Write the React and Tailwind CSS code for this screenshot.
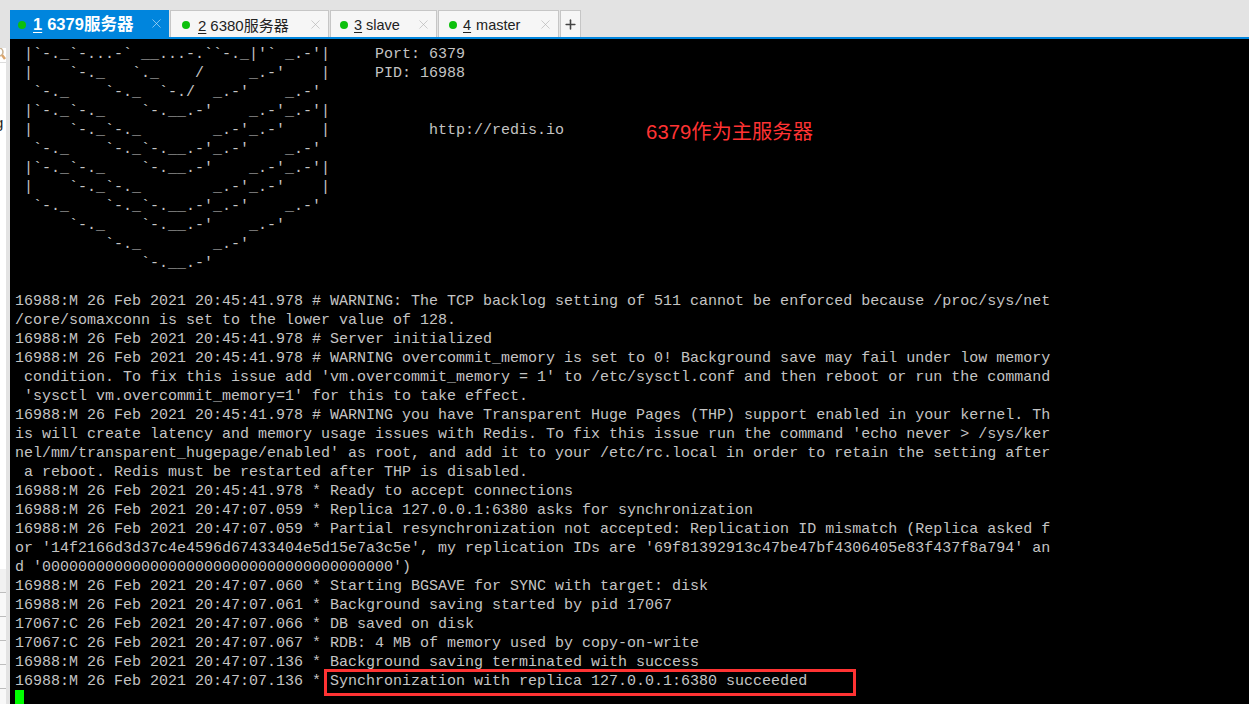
import React from 'react';
import { X, Plus } from 'lucide-react';

const tabs = [
  { num: '1', label: '6379服务器', width: 'w-[159px]', pad: 'pl-[8px]', gap: 'ml-[7px]', labelGap: 'ml-[5px]', size: 'text-[16.5px]', active: true },
  { num: '2', label: '6380服务器', width: 'w-[159px]', pad: 'pl-[11px]', gap: 'ml-[8px]', labelGap: 'ml-[4px]', size: 'text-[15px]' },
  { num: '3', label: 'slave', width: 'w-[107px]', pad: 'pl-[9px]', gap: 'ml-[6px]', labelGap: 'ml-[4px]', size: 'text-[14.5px]' },
  { num: '4', label: 'master', width: 'w-[121px]', pad: 'pl-[10px]', gap: 'ml-[6px]', labelGap: 'ml-[5px]', size: 'text-[14.5px]' },
];

const lines = [
  " |`-._`-...-` __...-.``-._|'` _.-'|     Port: 6379",
  " |    `-._   `._    /     _.-'    |     PID: 16988",
  "  `-._    `-._  `-./  _.-'    _.-'",
  " |`-._`-._    `-.__.-'    _.-'_.-'|",
  " |    `-._`-._        _.-'_.-'    |           http://redis.io         ",
  "  `-._    `-._`-.__.-'_.-'    _.-'",
  " |`-._`-._    `-.__.-'    _.-'_.-'|",
  " |    `-._`-._        _.-'_.-'    |",
  "  `-._    `-._`-.__.-'_.-'    _.-'",
  "      `-._    `-.__.-'    _.-'",
  "          `-._        _.-'",
  "              `-.__.-'",
  "",
  "16988:M 26 Feb 2021 20:45:41.978 # WARNING: The TCP backlog setting of 511 cannot be enforced because /proc/sys/net",
  "/core/somaxconn is set to the lower value of 128.",
  "16988:M 26 Feb 2021 20:45:41.978 # Server initialized",
  "16988:M 26 Feb 2021 20:45:41.978 # WARNING overcommit_memory is set to 0! Background save may fail under low memory",
  " condition. To fix this issue add 'vm.overcommit_memory = 1' to /etc/sysctl.conf and then reboot or run the command",
  " 'sysctl vm.overcommit_memory=1' for this to take effect.",
  "16988:M 26 Feb 2021 20:45:41.978 # WARNING you have Transparent Huge Pages (THP) support enabled in your kernel. Th",
  "is will create latency and memory usage issues with Redis. To fix this issue run the command 'echo never > /sys/ker",
  "nel/mm/transparent_hugepage/enabled' as root, and add it to your /etc/rc.local in order to retain the setting after",
  " a reboot. Redis must be restarted after THP is disabled.",
  "16988:M 26 Feb 2021 20:45:41.978 * Ready to accept connections",
  "16988:M 26 Feb 2021 20:47:07.059 * Replica 127.0.0.1:6380 asks for synchronization",
  "16988:M 26 Feb 2021 20:47:07.059 * Partial resynchronization not accepted: Replication ID mismatch (Replica asked f",
  "or '14f2166d3d37c4e4596d67433404e5d15e7a3c5e', my replication IDs are '69f81392913c47be47bf4306405e83f437f8a794' an",
  "d '000000000000000000000000000000000000000')",
  "16988:M 26 Feb 2021 20:47:07.060 * Starting BGSAVE for SYNC with target: disk",
  "16988:M 26 Feb 2021 20:47:07.061 * Background saving started by pid 17067",
  "17067:C 26 Feb 2021 20:47:07.066 * DB saved on disk",
  "17067:C 26 Feb 2021 20:47:07.067 * RDB: 4 MB of memory used by copy-on-write",
  "16988:M 26 Feb 2021 20:47:07.136 * Background saving terminated with success",
  "16988:M 26 Feb 2021 20:47:07.136 * Synchronization with replica 127.0.0.1:6380 succeeded",
];

const Tab = ({ num, label, width, pad, gap, labelGap, size, active }) => (
  <div className={`${width} ${pad} ${size} h-[27px] flex items-center pt-[2px] pr-[5px] leading-none font-['Liberation_Sans','Noto_Sans_CJK_SC',sans-serif] ${active ? 'bg-[#0085dd] text-white font-bold' : 'bg-[#f6f6f6] border border-b-0 border-[#c6c6c6] text-[#222]'}`}>
    <span className="w-[8px] h-[8px] rounded-full bg-[#0cc00c] shrink-0" />
    <span className={`${gap} underline underline-offset-2`}>{num}</span>
    <span className={`${labelGap} flex-1 whitespace-nowrap`}>{label}</span>
    <X size={15} strokeWidth={1} className={`-mt-[2px] ${active ? 'text-[#cfe8fa]' : 'text-[#b0b0b0]'}`} />
  </div>
);

export default function App() {
  return (
    <div className="w-[1249px] h-[704px] overflow-hidden bg-[#e3e3e3] flex">
      {/* window sitting behind the terminal, only a sliver shows */}
      <div className="w-[10px] shrink-0 flex flex-col">
        <div className="h-[48px] shrink-0" />
        <div className="w-[6px] flex-1 bg-white flex flex-col overflow-hidden">
          <div className="h-[14px] shrink-0">
            <svg width="6" height="14" viewBox="0 0 6 14" className="block">
              <circle cx="-1" cy="4" r="4" fill="none" stroke="#c9b08f" strokeWidth="1.5" />
              <path d="M2 7 L5 11" stroke="#dba56c" strokeWidth="2.5" />
            </svg>
          </div>
          <div className="h-[58px] shrink-0 border-t border-[#dcdcdc] pt-[53px]">
            <span className="block -ml-[5px] text-[15px] leading-[14px] text-[#222] font-['Liberation_Sans',sans-serif]">g</span>
          </div>
          <div className="h-[449px] shrink-0" />
          <div className="h-[24px] shrink-0 bg-[#f1f1f1] border-b border-[#bdbdbd]" />
          <div className="h-[24px] shrink-0 bg-[#f8f8f8] border-b border-[#bdbdbd]" />
          <div className="h-[24px] shrink-0 bg-[#f8f8f8] border-b border-[#bdbdbd]" />
          <div className="h-[24px] shrink-0 bg-[#f8f8f8] border-b border-[#bdbdbd]" />
          <div className="h-[24px] shrink-0 bg-[#f8f8f8] border-b border-[#bdbdbd]" />
          <div className="flex-1 bg-[#f8f8f8]" />
        </div>
      </div>

      <div className="flex-1 flex flex-col min-w-0">
        <div className="h-[37px] pt-[10px] flex gap-[1px] shrink-0">
          {tabs.map(t => <Tab key={t.num} {...t} />)}
          <div className="w-[21px] h-[27px] bg-[#f6f6f6] border border-b-0 border-[#c6c6c6] flex items-center justify-center text-[#444]">
            <Plus size={15} strokeWidth={2.5} />
          </div>
        </div>
        <div className="h-[2px] bg-[#0085dd] shrink-0" />

        <div className="relative flex-1 bg-black pt-[6px] pl-[5px] font-['Liberation_Mono',monospace] text-[15px] leading-[19px] text-[#c4c4c4] overflow-hidden">
          {lines.map((line, i) => (
            <div key={i} className="h-[19px] whitespace-pre">
              {line}
              {i === 4 && (
                <span className="relative top-[5px] ml-[1px] text-[20.3px] leading-[0] text-[#ff3333] font-['Liberation_Sans','Noto_Sans_CJK_SC',sans-serif]">6379作为主服务器</span>
              )}
            </div>
          ))}
          <div className="w-[9px] h-[15px] -mt-[1px] bg-[#00ff00]" />

          {/* red box drawn over the screenshot */}
          <div className="absolute left-[314px] top-[630px] w-[532px] h-[27px] border-[3px] border-[#ff3333]" />
        </div>
      </div>
    </div>
  );
}
